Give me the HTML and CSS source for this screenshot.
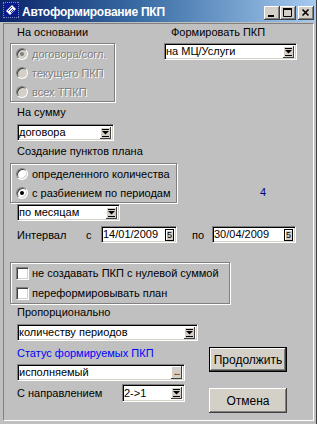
FILE: index.html
```html
<!DOCTYPE html>
<html lang="ru">
<head>
<meta charset="utf-8">
<title>Автоформирование ПКП</title>
<link rel="stylesheet" href="styles.css">
</head>
<body>
<div class="window">
  <div class="titlebar">
    <svg class="app-icon" width="16" height="16" viewBox="0 0 16 16">
      <rect x="0" y="0" width="16" height="16" fill="#0a1c8c"/>
      <path d="M0 0h16v16H0z" fill="none" stroke="#ffffff" stroke-width="1" stroke-dasharray="1 1"/>
      <path d="M3 9 L9 3 L13 7 L7 13 Z" fill="#ffffff"/>
      <path d="M5 9 L9 5 M7 10 L10 7 M8 11 L11 8" stroke="#2040c0" stroke-width="1"/>
    </svg>
    <span class="title-text">Автоформирование ПКП</span>
    <div class="caption-btns">
      <span class="cbtn"><svg width="16" height="14" viewBox="0 0 16 14"><rect x="4" y="9" width="6" height="2" fill="#000"/></svg></span>
      <span class="cbtn"><svg width="16" height="14" viewBox="0 0 16 14"><path d="M3.5 3.5h8v7h-8z" fill="none" stroke="#000"/><rect x="3" y="2" width="9" height="2" fill="#000"/></svg></span>
      <span class="cbtn close"><svg width="16" height="14" viewBox="0 0 16 14"><path d="M4.5 3.5 L10.5 9.5 M10.5 3.5 L4.5 9.5" stroke="#000" stroke-width="1.6"/></svg></span>
    </div>
  </div>

  <div class="client">
    <div class="sec-a">
      <div class="col-left">
        <div class="lbl in">На основании</div>
        <div class="group g1">
          <div class="opt disabled"><span class="radio checked"></span><span class="dis-text">договора/согл.</span></div>
          <div class="opt disabled"><span class="radio"></span><span class="dis-text">текущего ПКП</span></div>
          <div class="opt disabled"><span class="radio"></span><span class="dis-text">всех ТПКП</span></div>
        </div>
      </div>
      <div class="col-right">
        <div class="lbl in">Формировать ПКП</div>
        <div class="combo w-mc"><span class="ctext">на МЦ/Услуги</span><span class="dd"><svg width="7" height="8" viewBox="0 0 7 8"><rect x="0" y="0" width="7" height="1" fill="#000"/><path d="M0 2h7L3.5 5.5z" fill="#000"/><rect x="0" y="7" width="7" height="1" fill="#000"/></svg></span></div>
      </div>
    </div>

    <div class="lbl m17 mt4">На сумму</div>
    <div class="combo m17 mt5 w-dog"><span class="ctext">договора</span><span class="dd"><svg width="7" height="8" viewBox="0 0 7 8"><rect x="0" y="0" width="7" height="1" fill="#000"/><path d="M0 2h7L3.5 5.5z" fill="#000"/><rect x="0" y="7" width="7" height="1" fill="#000"/></svg></span></div>

    <div class="lbl m17 mt4">Создание пунктов плана</div>
    <div class="row-g2">
      <div class="group g2">
        <div class="opt"><span class="radio"></span><span>определенного количества</span></div>
        <div class="opt"><span class="radio checked"></span><span>с разбиением по периодам</span></div>
      </div>
      <span class="count">4</span>
    </div>

    <div class="combo m17 mt1 w-month"><span class="ctext">по месяцам</span><span class="dd"><svg width="7" height="8" viewBox="0 0 7 8"><rect x="0" y="0" width="7" height="1" fill="#000"/><path d="M0 2h7L3.5 5.5z" fill="#000"/><rect x="0" y="7" width="7" height="1" fill="#000"/></svg></span></div>

    <div class="interval">
      <span class="i-lbl">Интервал</span>
      <span class="i-s">с</span>
      <div class="date w-d1"><span class="ctext">14/01/2009</span><span class="cal">5</span></div>
      <span class="i-po">по</span>
      <div class="date w-d2"><span class="ctext">30/04/2009</span><span class="cal">5</span></div>
    </div>

    <div class="group g3">
      <div class="opt o20"><span class="check"></span><span>не создавать ПКП с нулевой суммой</span></div>
      <div class="opt o20"><span class="check"></span><span>переформировывать план</span></div>
    </div>

    <div class="lbl m17 mt2">Пропорционально</div>
    <div class="combo m17 mt5 w-prop"><span class="ctext">количеству периодов</span><span class="dd"><svg width="7" height="8" viewBox="0 0 7 8"><rect x="0" y="0" width="7" height="1" fill="#000"/><path d="M0 2h7L3.5 5.5z" fill="#000"/><rect x="0" y="7" width="7" height="1" fill="#000"/></svg></span></div>

    <div class="sec-b">
      <div class="b-left">
        <div class="lbl blue mt6">Статус формируемых ПКП</div>
        <div class="combo mt4 w-status"><span class="ctext">исполняемый</span><span class="ell">...</span></div>
        <div class="dir-row">
          <span class="dir-lbl">С направлением</span>
          <div class="combo w-dir"><span class="ctext">2-&gt;1</span><span class="dd"><svg width="7" height="8" viewBox="0 0 7 8"><rect x="0" y="0" width="7" height="1" fill="#000"/><path d="M0 2h7L3.5 5.5z" fill="#000"/><rect x="0" y="7" width="7" height="1" fill="#000"/></svg></span></div>
        </div>
      </div>
      <div class="b-right">
        <div class="btn default"><span class="btn-inner">Продолжить</span></div>
        <div class="btn cancel"><span class="btn-inner">Отмена</span></div>
      </div>
    </div>
  </div>
</div>
</body>
</html>
```

FILE: styles.css
```css
* { box-sizing: border-box; }
html, body { margin: 0; padding: 0; }
body {
  width: 317px;
  height: 424px;
  overflow: hidden;
  background: #c0c0c0;
  font-family: "Liberation Sans", Arial, sans-serif;
  font-size: 11px;
  color: #000;
}
.window {
  width: 317px;
  height: 424px;
  display: flex;
  flex-direction: column;
  background: #c0c0c0;
  border-right: 1px solid #404040;
}
.titlebar {
  height: 22px;
  flex: none;
  display: flex;
  align-items: center;
  padding-left: 3px;
  background: linear-gradient(to right, #0a246a 0%, #3a6ea5 45%, #a6caf0 100%);
}
.app-icon { flex: none; margin-top: -2px; }
.title-text {
  margin-left: 3px;
  color: #fff;
  font-weight: bold;
  font-size: 12px;
  letter-spacing: -0.25px;
  padding-top: 1px;
}
.caption-btns {
  margin-left: auto;
  display: flex;
  margin-right: 2px;
  margin-top: 4px;
}
.cbtn {
  width: 16px;
  height: 14px;
  background: #d4d0c8;
  box-shadow: inset -1px -1px #404040, inset 1px 1px #fff, inset -2px -2px #808080, inset 2px 2px #d4d0c8;
  display: block;
}
.cbtn svg { display: block; }
.cbtn.close { margin-left: 2px; }

.client {
  flex: 1;
  margin: 1px 2px 3px 3px;
  border-top: 1px solid #808080;
  border-left: 1px solid #808080;
  border-right: 1px solid #fff;
  border-bottom: 1px solid #fff;
  background: #c0c0c0;
}

.lbl { height: 13px; line-height: 13px; white-space: nowrap; }
.lbl.in { margin-top: 2px; margin-left: 7px; }
.m17 { margin-left: 13px; }
.mt1 { margin-top: 1px; }
.mt2 { margin-top: 2px; }
.mt4 { margin-top: 4px; }
.mt5 { margin-top: 5px; }
.mt6 { margin-top: 6px; }
.blue { color: #0000ff; }

.sec-a { display: flex; margin-left: 6px; }
.col-left { width: 105px; flex: none; }
.col-right { margin-left: 49px; }

.group {
  border: 1px solid #808080;
  box-shadow: inset 1px 1px #fff, 1px 1px #fff;
  margin-left: 6px;
}
.col-left .group { margin-left: 0; }
.g1 { margin-top: 4px; width: 105px; height: 59px; }
.g2 { width: 167px; height: 40px; flex: none; margin-left: 0; }
.g3 { width: 220px; height: 42px; margin-top: 19px; }

.opt {
  display: flex;
  align-items: center;
  height: 19px;
  padding-left: 5px;
  gap: 4px;
  white-space: nowrap;
}
.opt.o20 { height: 20px; gap: 3px; }

.dis-text { color: #808080; text-shadow: 1px 1px 0 #fff; }

.radio {
  width: 12px;
  height: 12px;
  flex: none;
  border-radius: 50%;
  background: #fff;
  position: relative;
  border: 1px solid;
  border-color: #808080 #fff #fff #808080;
  box-shadow: inset 1px 1px #404040, inset -1px -1px #d4d0c8;
}
.radio.checked::after {
  content: "";
  position: absolute;
  left: 3px;
  top: 3px;
  width: 4px;
  height: 4px;
  border-radius: 50%;
  background: #000;
}
.disabled .radio { background: #d4d0c8; }
.disabled .radio.checked::after { background: #808080; }

.check {
  width: 13px;
  height: 13px;
  flex: none;
  background: #fff;
  border: 1px solid;
  border-color: #808080 #fff #fff #808080;
  box-shadow: inset 1px 1px #404040, inset -1px -1px #d4d0c8;
}

.row-g2 { display: flex; margin-top: 5px; margin-left: 6px; }
.count {
  color: #000080;
  margin-left: 83px;
  align-self: flex-end;
  margin-bottom: 4px;
  line-height: 13px;
}

.combo, .date {
  height: 17px;
  display: flex;
  align-items: center;
  background: #fff;
  border: 1px solid;
  border-color: #808080 #fff #fff #808080;
  box-shadow: inset 1px 1px #000, inset -1px -1px #d4d0c8;
  padding: 1px 2px 1px 1px;
}
.ctext { flex: 1; white-space: nowrap; line-height: 13px; overflow: hidden; }
.dd {
  width: 11px;
  height: 12px;
  flex: none;
  background: #d4d0c8;
  box-shadow: inset -1px -1px #404040, inset 1px 1px #fff;
  display: flex;
  align-items: center;
  justify-content: center;
}
.dd svg { display: block; }
.w-mc { width: 133px; margin-top: 4px; }
.w-dog { width: 97px; }
.w-month { width: 103px; }
.w-prop { width: 181px; }
.w-status { width: 168px; }
.w-dir { width: 63px; height: 18px; }

.ell {
  width: 11px;
  height: 13px;
  flex: none;
  background: #d4d0c8;
  box-shadow: inset -1px -1px #404040, inset 1px 1px #fff;
  font-size: 10px;
  line-height: 12px;
  text-align: center;
  letter-spacing: -1px;
}

.interval {
  display: flex;
  align-items: center;
  margin-top: 5px;
  margin-left: 13px;
  height: 17px;
}
.i-lbl { width: 69px; flex: none; }
.i-s { width: 15px; flex: none; }
.i-po { width: 20px; margin-left: 15px; flex: none; }
.w-d1 { width: 76px; flex: none; }
.w-d2 { width: 84px; flex: none; }
.cal {
  width: 9px;
  height: 12px;
  flex: none;
  border: 1px solid #000;
  box-shadow: inset 1px 1px #fff;
  background: #d4d0c8;
  font-size: 9px;
  line-height: 10px;
  text-align: center;
}

.sec-b { display: flex; margin-left: 13px; }
.b-left { width: 168px; flex: none; }
.b-right { margin-left: 24px; display: flex; flex-direction: column; }
.dir-row {
  display: flex;
  align-items: center;
  margin-top: 3px;
}
.dir-lbl { width: 105px; flex: none; }

.btn {
  width: 78px;
  height: 25px;
  background: #d4d0c8;
  display: flex;
  font-size: 12px;
}
.btn-inner {
  flex: 1;
  display: flex;
  align-items: center;
  justify-content: center;
}
.btn.default {
  margin-top: 6px;
  border: 1px solid #000;
}
.btn.default .btn-inner {
  box-shadow: inset -1px -1px #404040, inset 1px 1px #fff, inset -2px -2px #808080;
}
.btn.cancel {
  margin-top: 16px;
  box-shadow: inset -1px -1px #404040, inset 1px 1px #fff, inset -2px -2px #808080, inset 2px 2px #d4d0c8;
}
```
